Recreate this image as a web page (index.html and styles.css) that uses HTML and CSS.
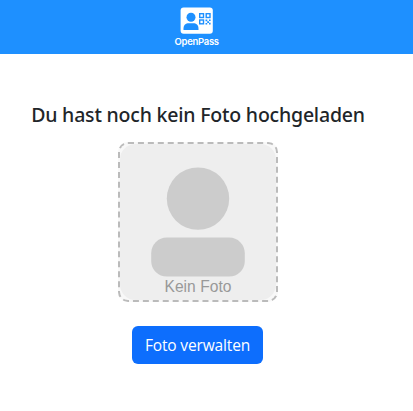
FILE: index.html
```html
<!DOCTYPE html>
<html lang="de">
<head>
<meta charset="utf-8">
<title>OpenPass</title>
<link rel="stylesheet" href="styles.css">
</head>
<body>
<header class="topbar">
  <svg class="logo" width="48" height="48" viewBox="0 0 48 48" role="img" aria-label="OpenPass">
    <rect x="7.6" y="4.4" width="32.2" height="26.4" rx="3" fill="#fff"/>
    <g fill="#1e90ff">
      <circle cx="18" cy="14.2" r="4.5"/>
      <path d="M10.500 27v-1.500c0-3.500 2.300-5.200 5.200-5.200h4.600c2.900 0 5.200 1.700 5.200 5.200V27z"/>
      <path d="M32.500 16.500h1.800v1.800h-1.800zM36 16.500h1.600v1.600H36zM34.200 18.200h1.800V20h-1.800zM32.500 20h1.700v1.600h-1.700zM36 19.800h1.600v1.800H36z"/>
    </g>
    <g fill="none" stroke="#1e90ff" stroke-width="1.400">
      <rect x="26.700" y="10.700" width="3.800" height="3.800"/>
      <rect x="33.200" y="10.700" width="3.800" height="3.800"/>
      <rect x="26.700" y="17" width="3.800" height="3.800"/>
    </g>
    <text class="logo-name" x="23.800" y="42" text-anchor="middle" textLength="44.500">OpenPass</text>
  </svg>
</header>
<main class="content">
  <h1 class="title">Du hast noch kein Foto hochgeladen</h1>
  <div class="photo">
    <svg width="156" height="156" viewBox="0 0 200 200">
      <rect width="200" height="200" rx="20" fill="#eee"/>
      <circle cx="100" cy="70" r="40" fill="#ccc"/>
      <rect x="40" y="120" width="120" height="50" rx="20" fill="#ccc"/>
      <text class="photo-label" x="100" y="190" text-anchor="middle" textLength="86">Kein Foto</text>
    </svg>
  </div>
  <a class="button" href="#">Foto verwalten</a>
</main>
</body>
</html>
```
FILE: styles.css
```css
* {
  box-sizing: border-box;
}

body {
  margin: 0;
  background: #fff;
  color: #212529;
  font-family: "Segoe UI", "Open Sans", "Noto Sans", sans-serif;
}

.topbar {
  display: flex;
  justify-content: center;
  height: 54px;
  padding: 3px 19px 3px 0;
  background: #1e90ff;
}

.logo-name {
  font: 600 9.5px Inter, "Liberation Sans", Arial, sans-serif;
  fill: #fff;
}

.content {
  display: flex;
  flex-direction: column;
  align-items: center;
  padding: 49px 17px 0 0;
}

.title {
  margin: 0 0 15px;
  font-family: "Segoe UI", "Noto Sans", "Open Sans", sans-serif;
  font-size: 19.5px;
  font-weight: 500;
  line-height: 24px;
  letter-spacing: -0.2px;
  white-space: nowrap;
}

.photo {
  width: 160px;
  height: 160px;
  border: 2px dashed #bbb;
  border-radius: 10px;
  background: #f8f8f8;
}

.photo svg {
  display: block;
}

.photo-label {
  font: 20px "Liberation Sans", Arial, sans-serif;
  fill: #999;
}

.button {
  display: flex;
  align-items: center;
  justify-content: center;
  width: 131px;
  height: 38px;
  margin-top: 24px;
  margin-right: 1px;
  border-radius: 6px;
  background: #0d6efd;
  color: #fff;
  font-size: 15.5px;
  letter-spacing: -0.15px;
  line-height: 24px;
  text-decoration: none;
  white-space: nowrap;
}
```
